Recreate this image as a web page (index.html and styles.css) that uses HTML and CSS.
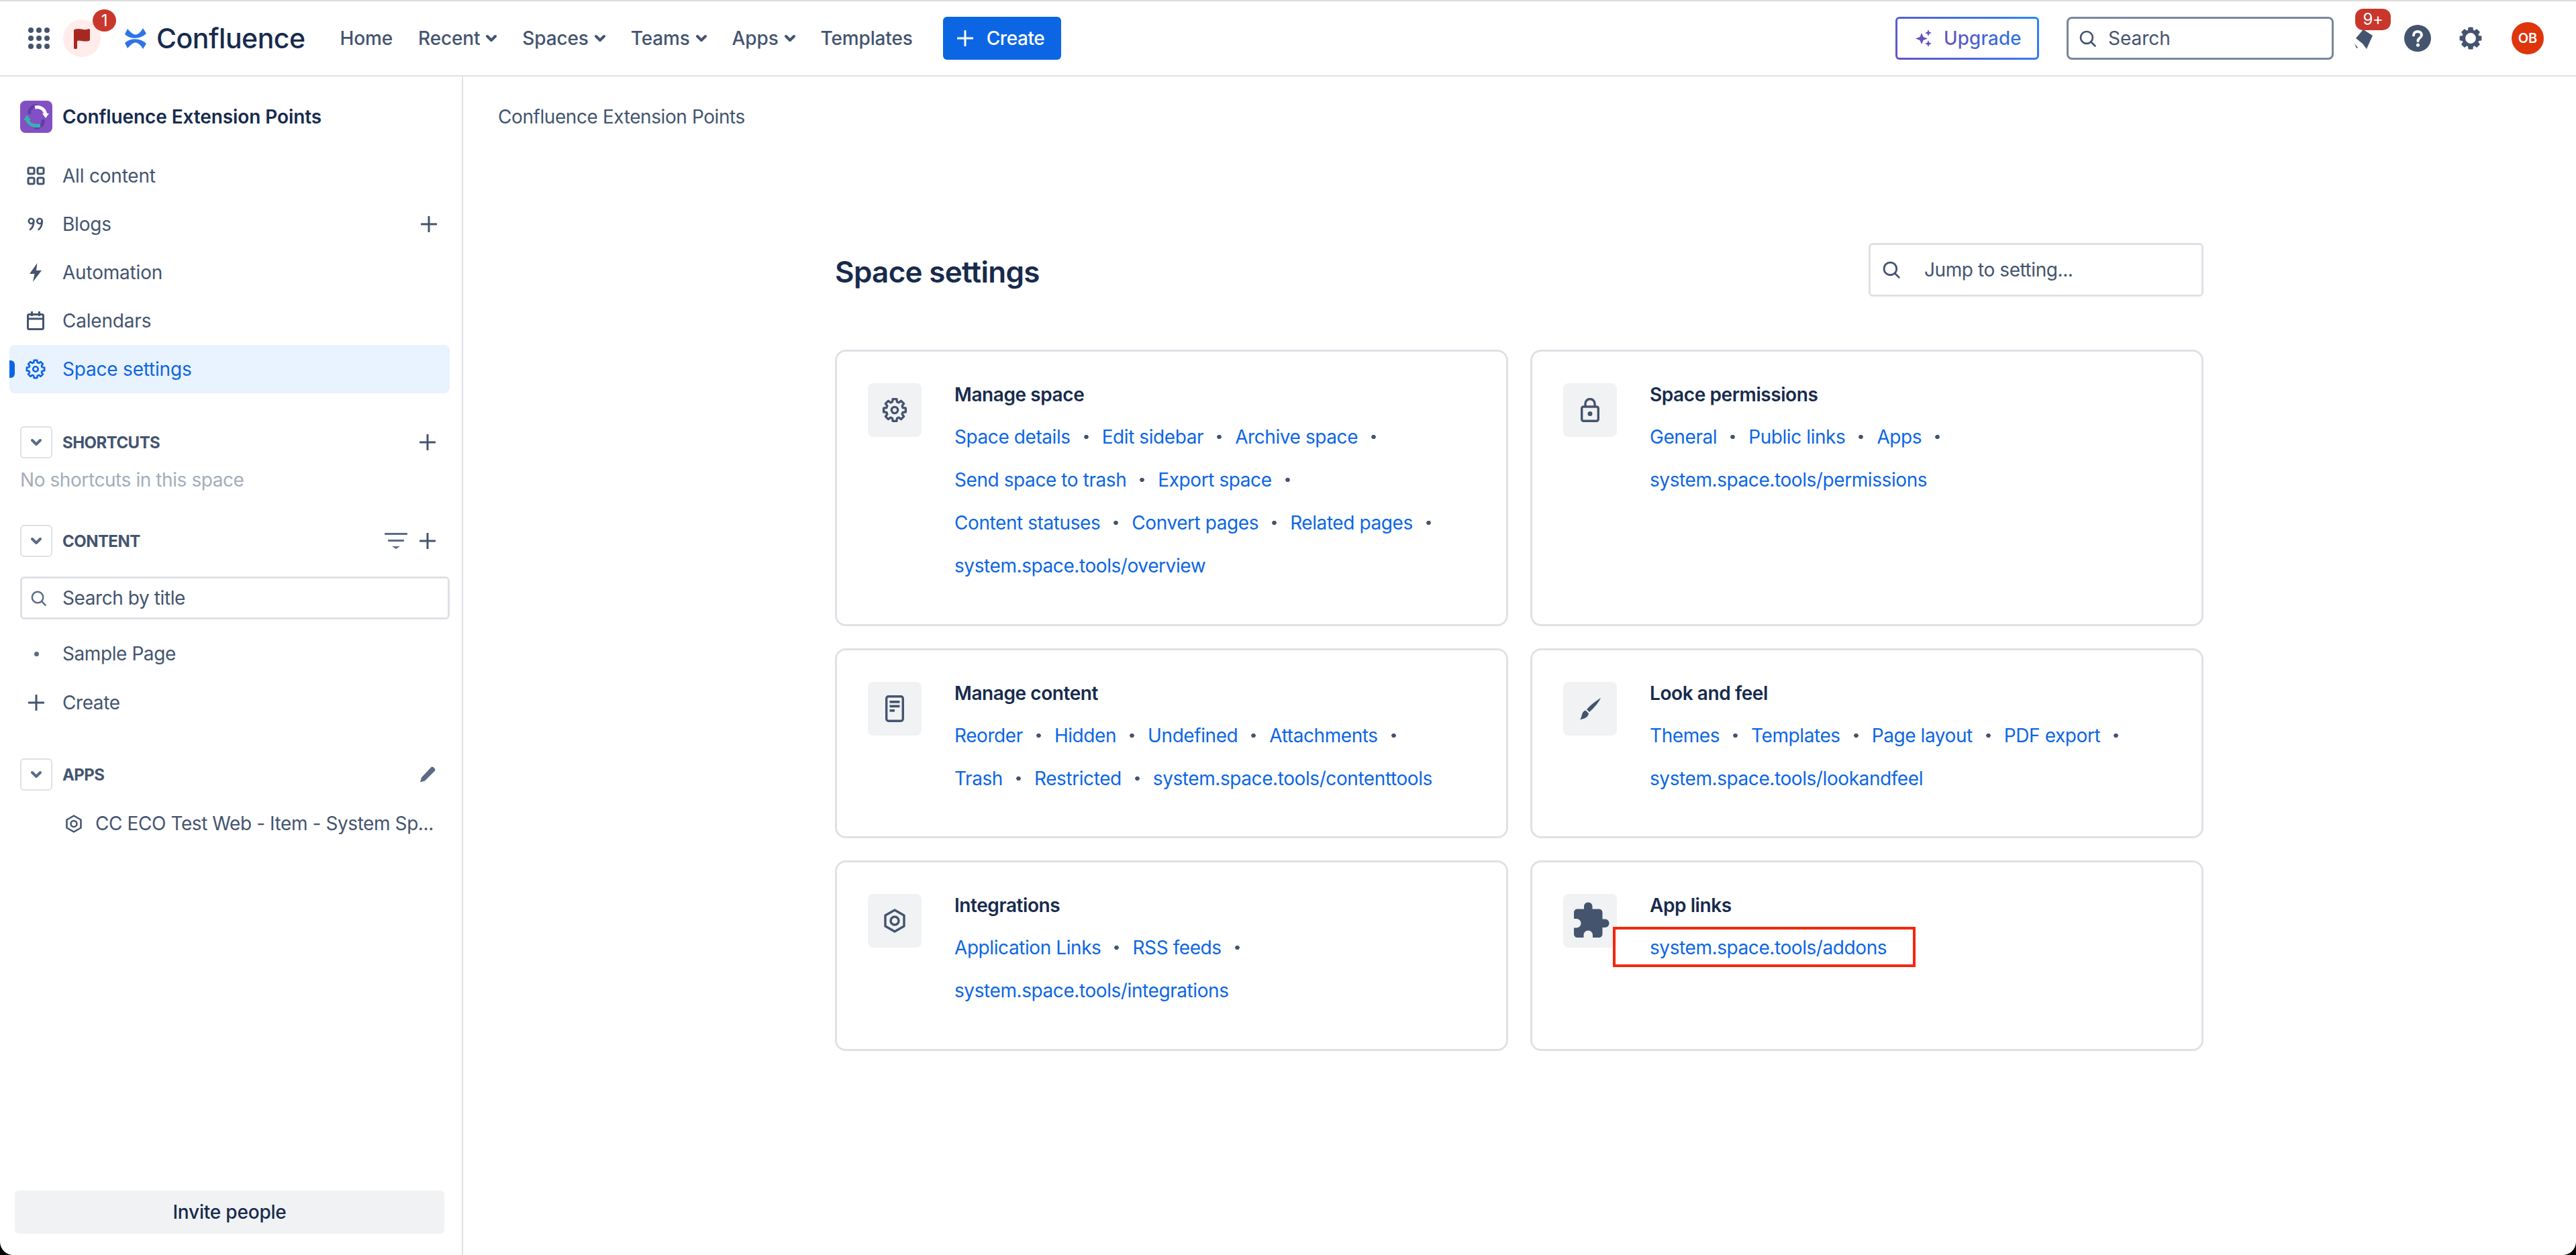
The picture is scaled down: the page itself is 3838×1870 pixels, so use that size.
FILE: index.html
```html
<!DOCTYPE html>
<html lang="en">
<head>
<meta charset="utf-8">
<title>Space settings - Confluence</title>
<link rel="stylesheet" href="styles.css">
</head>
<body>
<svg class="defs" width="0" height="0" aria-hidden="true">
  <defs>
    <symbol id="cog" viewBox="0 0 24 24">
      <polygon fill="none" stroke="currentColor" stroke-width="2" stroke-linejoin="round" points="9.91,4.69 10.26,2.15 13.74,2.15 14.09,4.69 15.68,5.35 17.74,3.81 20.19,6.26 18.65,8.32 19.31,9.91 21.85,10.26 21.85,13.74 19.31,14.09 18.65,15.68 20.19,17.74 17.74,20.19 15.68,18.65 14.09,19.31 13.74,21.85 10.26,21.85 9.91,19.31 8.32,18.65 6.26,20.19 3.81,17.74 5.35,15.68 4.69,14.09 2.15,13.74 2.15,10.26 4.69,9.91 5.35,8.32 3.81,6.26 6.26,3.81 8.32,5.35"/>
      <circle cx="12" cy="12" r="2.8" fill="none" stroke="currentColor" stroke-width="2"/>
    </symbol>
    <symbol id="plus" viewBox="0 0 24 24">
      <path d="M12 1v22M1 12h22" fill="none" stroke="currentColor" stroke-width="3" stroke-linecap="round"/>
    </symbol>
    <symbol id="chev" viewBox="0 0 16 12">
      <path d="M2 3l6 6 6-6" fill="none" stroke="currentColor" stroke-width="4" stroke-linecap="round" stroke-linejoin="round"/>
    </symbol>
    <symbol id="search" viewBox="0 0 24 24">
      <circle cx="10.5" cy="10.5" r="8.6" fill="none" stroke="currentColor" stroke-width="2.6"/>
      <path d="M17 17l5.5 5.5" fill="none" stroke="currentColor" stroke-width="2.6" stroke-linecap="round"/>
    </symbol>
    <symbol id="hex" viewBox="0 0 32 36">
      <polygon points="16,2 30,10 30,26 16,34 2,26 2,10" fill="none" stroke="currentColor" stroke-width="3.4" stroke-linejoin="round"/>
      <circle cx="16" cy="18" r="6" fill="none" stroke="currentColor" stroke-width="3.4"/>
    </symbol>
  </defs>
</svg>
<div class="app">
  <header class="topbar">
    <div class="top-left">
      <svg class="i-grid" viewBox="0 0 32 32" aria-hidden="true"><g fill="#44546f"><circle cx="4" cy="4" r="4"/><circle cx="16" cy="4" r="4"/><circle cx="28" cy="4" r="4"/><circle cx="4" cy="16" r="4"/><circle cx="16" cy="16" r="4"/><circle cx="28" cy="16" r="4"/><circle cx="4" cy="28" r="4"/><circle cx="16" cy="28" r="4"/><circle cx="28" cy="28" r="4"/></g></svg>
      <div class="flag">
        <svg class="i-flag" viewBox="0 0 24 31" aria-hidden="true"><path d="M0 3.5Q0 2 2 1.6Q7 .2 12 1.6T22 1Q24 .7 24 2.5V17Q24 18.6 22.4 19Q17 20.2 12 19T5 19V29.5Q5 31 2.5 31T0 29.5z" fill="#a6291f"/></svg>
        <span class="flag-badge">1</span>
      </div>
      <svg class="i-logo" viewBox="0 0 33 31" aria-hidden="true"><g fill="#2f74e6"><path d="M5 1C10 7 14 9.500 17 9.500C20 9.500 24 7 28 0L33 8C28 12.500 23 14.800 17 14.800C10 14.800 5 13 1 9z"/><path d="M5 30C10 24 14 21.500 17 21.500C20 21.500 24 24 28 31L33 23C28 18.500 23 16.200 17 16.200C10 16.200 5 18 1 22z"/></g></svg>
      <span class="wordmark">Confluence</span>
      <nav class="nav">
        <span class="nav-item">Home</span>
        <span class="nav-item">Recent<svg class="i-chev"><use href="#chev"/></svg></span>
        <span class="nav-item">Spaces<svg class="i-chev"><use href="#chev"/></svg></span>
        <span class="nav-item">Teams<svg class="i-chev"><use href="#chev"/></svg></span>
        <span class="nav-item">Apps<svg class="i-chev"><use href="#chev"/></svg></span>
        <span class="nav-item">Templates</span>
      </nav>
      <button class="create"><svg class="i-plus-sm"><use href="#plus"/></svg>Create</button>
    </div>
    <div class="top-right">
      <button class="upgrade">
        <svg class="i-spark" viewBox="0 0 26 26" aria-hidden="true"><g fill="#6554c0"><path d="M10 5L12.5 11 19 13.5 12.5 16 10 22 7.500 16 1 13.500 7.500 11z"/><path d="M20 0L21.400 3.600 25 5 21.400 6.400 20 10 18.600 6.400 15 5 18.600 3.600z"/><path d="M20 16L21.400 19.600 25 21 21.400 22.400 20 26 18.600 22.400 15 21 18.600 19.600z"/></g></svg>
        <span class="upgrade-text">Upgrade</span>
      </button>
      <div class="top-search"><svg class="i-search"><use href="#search"/></svg><span>Search</span></div>
      <div class="bell">
        <svg class="i-bell" viewBox="0 0 30 32" aria-hidden="true"><g fill="#44546f"><path d="M14 1L28 10 19 30 13 22 3 14z"/><path d="M1 22l5 6-2 1z"/></g></svg>
        <span class="bell-badge">9+</span>
      </div>
      <svg class="i-help" viewBox="0 0 40 40" aria-hidden="true"><circle cx="20" cy="20" r="20" fill="#44546f"/><path d="M14 15.500C14 12 16.800 10 20 10S26 12 26 15.200C26 19.500 20.500 19.500 20.500 24" fill="none" stroke="#fff" stroke-width="4" stroke-linecap="round"/><circle cx="20.500" cy="30" r="2.600" fill="#fff"/></svg>
      <svg class="i-gear" viewBox="0 0 24 24" aria-hidden="true"><polygon fill="#44546f" stroke="#44546f" stroke-width="1" stroke-linejoin="round" points="9.910,4.690 10.260,2.150 13.740,2.150 14.090,4.690 15.680,5.350 17.740,3.810 20.190,6.260 18.650,8.320 19.310,9.910 21.850,10.260 21.850,13.740 19.310,14.090 18.650,15.680 20.190,17.740 17.740,20.190 15.680,18.650 14.090,19.310 13.740,21.850 10.260,21.850 9.910,19.310 8.320,18.650 6.260,20.190 3.810,17.740 5.350,15.680 4.690,14.090 2.150,13.740 2.150,10.260 4.690,9.910 5.350,8.320 3.810,6.260 6.260,3.810 8.320,5.350"/><circle cx="12" cy="12" r="5" fill="#fff"/></svg>
      <span class="avatar">OB</span>
    </div>
  </header>
  <div class="body-row">
    <aside class="sidebar">
      <div class="space-head">
        <svg class="space-logo" viewBox="0 0 48 48" aria-hidden="true">
          <rect width="48" height="48" rx="8" fill="#8350c4"/>
          <path d="M14 20C12 12 20 7 26 8" fill="none" stroke="#5e3fa8" stroke-width="5"/>
          <path d="M34 28C36 36 28 41 22 40" fill="none" stroke="#5e3fa8" stroke-width="5"/>
          <path d="M22 10C30 8 37 13 38 21" fill="none" stroke="#fff" stroke-width="5"/>
          <path d="M33 19l5 7 5-7z" fill="#fff"/>
          <path d="M10 26C11 34 19 39 30 37" fill="none" stroke="#36b3ae" stroke-width="5"/>
          <path d="M5 29l5-8 6 8z" fill="#36b3ae"/>
        </svg>
        <span class="space-name">Confluence Extension Points</span>
      </div>
      <ul class="side-nav">
        <li class="side-row">
          <svg class="i-side" viewBox="0 0 28 28" aria-hidden="true"><g fill="none" stroke="#44546f" stroke-width="3"><rect x="3" y="2" width="9" height="9" rx="2"/><rect x="17" y="2" width="9" height="9" rx="2"/><rect x="3" y="17" width="9" height="9" rx="2"/><rect x="17" y="17" width="9" height="9" rx="2"/></g></svg>
          <span class="grow">All content</span>
        </li>
        <li class="side-row">
          <svg class="i-side" viewBox="0 0 28 28" aria-hidden="true"><g fill="none" stroke="#44546f" stroke-width="2.600" stroke-linecap="round"><circle cx="7.500" cy="9.500" r="3.700"/><path d="M11.200 9.500C11.200 15 10 19 6 22"/><circle cx="20" cy="9.500" r="3.700"/><path d="M23.700 9.500C23.700 15 22.500 19 18.500 22"/></g></svg>
          <span class="grow">Blogs</span>
          <svg class="i-plus"><use href="#plus"/></svg>
        </li>
        <li class="side-row">
          <svg class="i-side" viewBox="0 0 28 28" aria-hidden="true"><path d="M16.500 0L5 16h7.500L10 28 23 11h-8z" fill="#44546f"/></svg>
          <span class="grow">Automation</span>
        </li>
        <li class="side-row">
          <svg class="i-side" viewBox="0 0 28 28" aria-hidden="true"><g fill="none" stroke="#44546f" stroke-width="3"><rect x="2.500" y="4.500" width="23" height="22" rx="2"/><path d="M2.500 11h23M8.500 0v7M19.500 0v7"/></g></svg>
          <span class="grow">Calendars</span>
        </li>
        <li class="side-row active">
          <span class="marker"></span>
          <svg class="i-side i-cog"><use href="#cog"/></svg>
          <span class="grow">Space settings</span>
        </li>
      </ul>

      <div class="sec-head sec-shortcuts">
        <span class="sec-toggle"><svg class="i-chev-sm"><use href="#chev"/></svg></span>
        <span class="sec-title">SHORTCUTS</span>
        <svg class="i-plus"><use href="#plus"/></svg>
      </div>
      <p class="empty">No shortcuts in this space</p>

      <div class="sec-head sec-content">
        <span class="sec-toggle"><svg class="i-chev-sm"><use href="#chev"/></svg></span>
        <span class="sec-title">CONTENT</span>
        <svg class="i-filter" viewBox="0 0 34 24" aria-hidden="true"><g fill="#5b6b85"><rect width="34" height="3" rx="1"/><rect x="5" y="10" width="24" height="3" rx="1"/><path d="M11 20h12l-6 4z"/></g></svg>
        <svg class="i-plus"><use href="#plus"/></svg>
      </div>
      <div class="title-search"><svg class="i-search-sm"><use href="#search"/></svg><span>Search by title</span></div>
      <div class="tree-row"><span class="tree-icon"><span class="dot"></span></span><span>Sample Page</span></div>
      <div class="tree-row"><span class="tree-icon"><svg class="i-plus"><use href="#plus"/></svg></span><span>Create</span></div>

      <div class="sec-head sec-apps">
        <span class="sec-toggle"><svg class="i-chev-sm"><use href="#chev"/></svg></span>
        <span class="sec-title">APPS</span>
        <svg class="i-pencil" viewBox="0 0 24 24" aria-hidden="true"><path d="M17 1.500a3 3 0 0 1 4 0l1.500 1.500a3 3 0 0 1 0 4L8 21.500l-7 2 2-7z" fill="#5b6b85"/></svg>
      </div>
      <div class="app-row"><svg class="i-hex-sm"><use href="#hex"/></svg><span class="app-name">CC ECO Test Web - Item - System Sp...</span></div>

      <button class="invite">Invite people</button>
    </aside>

    <main class="main">
      <div class="crumb">Confluence Extension Points</div>
      <div class="content">
        <div class="page-head">
          <h1>Space settings</h1>
          <div class="jump"><svg class="i-search-md"><use href="#search"/></svg><span>Jump to setting...</span></div>
        </div>
        <div class="cards">
          <section class="card">
            <div class="card-icon"><svg class="ic-cog"><use href="#cog"/></svg></div>
            <div class="card-body">
              <h2>Manage space</h2>
              <div class="link-row"><a>Space details</a><i></i><a>Edit sidebar</a><i></i><a>Archive space</a><i></i></div>
              <div class="link-row"><a>Send space to trash</a><i></i><a>Export space</a><i></i></div>
              <div class="link-row"><a>Content statuses</a><i></i><a>Convert pages</a><i></i><a>Related pages</a><i></i></div>
              <div class="link-row"><a>system.space.tools/overview</a></div>
            </div>
          </section>
          <section class="card">
            <div class="card-icon">
              <svg class="ic-lock" viewBox="0 0 28 36" aria-hidden="true"><g fill="none" stroke="#44546f" stroke-width="3.400"><rect x="1.700" y="13" width="24.600" height="21.300" rx="2.500"/><path d="M7 13V8.500a7 7 0 0 1 14 0V13"/></g><circle cx="14" cy="23.500" r="3.500" fill="#44546f"/></svg>
            </div>
            <div class="card-body">
              <h2>Space permissions</h2>
              <div class="link-row"><a>General</a><i></i><a>Public links</a><i></i><a>Apps</a><i></i></div>
              <div class="link-row"><a>system.space.tools/permissions</a></div>
            </div>
          </section>
          <section class="card">
            <div class="card-icon">
              <svg class="ic-doc" viewBox="0 0 28 40" aria-hidden="true"><rect x="1.700" y="1.700" width="24.600" height="36.600" rx="3" fill="none" stroke="#44546f" stroke-width="3.400"/><g fill="#44546f"><rect x="6.500" y="8" width="15" height="3.600"/><rect x="6.500" y="14.500" width="15" height="3.600"/><rect x="6.500" y="21" width="7.500" height="3.600"/></g></svg>
            </div>
            <div class="card-body">
              <h2>Manage content</h2>
              <div class="link-row"><a>Reorder</a><i></i><a>Hidden</a><i></i><a>Undefined</a><i></i><a>Attachments</a><i></i></div>
              <div class="link-row"><a>Trash</a><i></i><a>Restricted</a><i></i><a>system.space.tools/contenttools</a></div>
            </div>
          </section>
          <section class="card">
            <div class="card-icon">
              <svg class="ic-brush" viewBox="0 0 33 32" aria-hidden="true"><g fill="#44546f"><path d="M32 0C30 5 22 15 15 21L11 17C17 10 27 3 32 0z"/><path d="M9.500 18.500L14 23C13.500 28 8 31.500 1 32C3.500 29 3 27 4.500 23C5.500 20.500 7.500 19 9.500 18.500z"/></g></svg>
            </div>
            <div class="card-body">
              <h2>Look and feel</h2>
              <div class="link-row"><a>Themes</a><i></i><a>Templates</a><i></i><a>Page layout</a><i></i><a>PDF export</a><i></i></div>
              <div class="link-row"><a>system.space.tools/lookandfeel</a></div>
            </div>
          </section>
          <section class="card">
            <div class="card-icon"><svg class="ic-hex"><use href="#hex"/></svg></div>
            <div class="card-body">
              <h2>Integrations</h2>
              <div class="link-row"><a>Application Links</a><i></i><a>RSS feeds</a><i></i></div>
              <div class="link-row"><a>system.space.tools/integrations</a></div>
            </div>
          </section>
          <section class="card">
            <div class="card-icon">
              <svg class="ic-puzzle" viewBox="0 0 24 24" aria-hidden="true"><path fill="#44546f" d="M20.500 11H19V7c0-1.100-.9-2-2-2h-4V3.500C13 2.120 11.880 1 10.500 1S8 2.120 8 3.500V5H4c-1.100 0-1.990.9-1.990 2v3.800H3.500c1.490 0 2.700 1.210 2.700 2.700s-1.210 2.700-2.700 2.700H2V20c0 1.100.9 2 2 2h3.800v-1.500c0-1.490 1.210-2.700 2.700-2.700 1.490 0 2.700 1.210 2.700 2.700V22H17c1.100 0 2-.9 2-2v-4h1.500c1.380 0 2.500-1.120 2.500-2.500S21.880 11 20.500 11z"/></svg>
            </div>
            <div class="card-body">
              <h2>App links</h2>
              <div class="link-row"><a>system.space.tools/addons</a></div>
            </div>
            <div class="annotation"></div>
          </section>
        </div>
      </div>
    </main>
  </div>
</div>
</body>
</html>
```
FILE: styles.css
```css
* { box-sizing: border-box; }
html, body { margin: 0; padding: 0; height: 100%; background: #000; }
body { font-family: Inter, "Liberation Sans", sans-serif; font-size: 28px; letter-spacing: -0.42px; color: #44546f; overflow: hidden; }
.defs { position: absolute; }
ul { list-style: none; margin: 0; padding: 0; }
button { font: inherit; letter-spacing: inherit; border: 0; padding: 0; }
svg { display: block; flex: none; }

.app { width: 3838px; height: 1870px; background: #fff; border-radius: 0 0 20px 20px; overflow: hidden; display: flex; flex-direction: column; }

/* Top bar */
.topbar { height: 114px; flex: none; border-top: 2px solid #dcdcdc; border-bottom: 2px solid #dfe1e6; display: flex; align-items: center; justify-content: space-between; padding: 0 48px 0 42px; }
.top-left, .top-right { display: flex; align-items: center; }
.i-grid { width: 32px; height: 32px; }
.flag { position: relative; width: 56px; height: 56px; margin-left: 20px; border-radius: 50%; background: #ffeceb; display: flex; align-items: center; justify-content: center; }
.i-flag { width: 24px; height: 31px; }
.flag-badge { position: absolute; left: 44px; top: -15px; width: 35px; height: 33px; border-radius: 50%; background: #c9372c; color: #fff; font-size: 24px; line-height: 33px; text-align: center; }
.i-logo { width: 33px; height: 31px; margin-left: 35px; }
.wordmark { margin-left: 15px; font-size: 41px; line-height: 50px; color: #172b4d; font-weight: 500; letter-spacing: -0.5px; }
.nav { display: flex; align-items: center; gap: 38px; margin-left: 52px; letter-spacing: -0.15px; }
.nav-item { display: flex; align-items: center; gap: 9px; font-weight: 500; color: #44546f; line-height: 40px; }
.i-chev { width: 16px; height: 12px; color: #44546f; }
.create { margin-left: 45px; height: 64px; width: 176px; border-radius: 6px; background: #0c66e4; color: #fff; font-weight: 500; display: flex; align-items: center; padding-left: 21px; gap: 20px; }
.i-plus-sm { width: 24px; height: 24px; }

.upgrade { width: 214px; height: 64px; border-radius: 6px; border: 3px solid transparent; background: linear-gradient(#fff, #fff) padding-box, linear-gradient(45deg, #6554c0, #2684ff) border-box; display: flex; align-items: center; padding-left: 26px; gap: 17px; letter-spacing: 0; }
.i-spark { width: 26px; height: 26px; }
.upgrade-text { font-weight: 500; background: linear-gradient(90deg, #6554c0, #2d74e8); -webkit-background-clip: text; background-clip: text; color: transparent; }
.top-search { width: 398px; height: 64px; margin-left: 41px; border: 3px solid #7a869a; border-radius: 8px; display: flex; align-items: center; padding-left: 16px; gap: 18px; color: #44546f; letter-spacing: 0; }
.i-search { width: 25px; height: 25px; color: #44546f; }
.bell { position: relative; width: 30px; height: 32px; margin-left: 30px; margin-top: 4px; }
.i-bell { width: 30px; height: 32px; }
.bell-badge { position: absolute; left: 2px; top: -30px; width: 53px; height: 32px; border-radius: 12px; background: #c9372c; color: #fff; font-size: 24px; line-height: 32px; text-align: center; }
.i-help { width: 40px; height: 40px; margin-left: 45px; }
.i-gear { width: 38px; height: 38px; margin-left: 40px; }
.avatar { width: 48px; height: 48px; margin-left: 42px; border-radius: 50%; background: #de350b; color: #fff; font-size: 20px; font-weight: 600; line-height: 48px; text-align: center; letter-spacing: 0; }

.body-row { flex: 1; display: flex; min-height: 0; }

/* Sidebar */
.sidebar { width: 690px; flex: none; border-right: 2px solid #dfe1e6; display: flex; flex-direction: column; padding-top: 36px; }
.space-head { display: flex; align-items: center; gap: 15px; padding-left: 30px; height: 48px; }
.space-logo { width: 48px; height: 48px; }
.space-name { font-weight: 600; color: #172b4d; letter-spacing: -0.1px; }
.side-nav { margin-top: 28px; letter-spacing: -0.2px; }
.side-row { position: relative; height: 72px; margin-left: 14px; width: 656px; padding: 0 19px 0 25px; display: flex; align-items: center; gap: 26px; }
.grow { flex: 1; }
.i-side { width: 28px; height: 28px; }
.i-plus { width: 24px; height: 24px; color: #44546f; }
.active { background: #e9f2ff; border-radius: 8px; color: #0c66e4; }
.marker { position: absolute; left: 0; top: 23px; width: 8px; height: 26px; background: #0c66e4; border-radius: 0 6px 6px 0; }
.i-cog { color: #0c66e4; width: 32px; height: 32px; margin: 0 -2px; }

.sec-head { display: flex; align-items: center; height: 48px; padding-left: 30px; padding-right: 39px; }
.sec-shortcuts { margin-top: 49px; }
.sec-content { margin-top: 47px; }
.sec-apps { margin-top: 47px; }
.sec-toggle { width: 48px; height: 48px; flex: none; border: 2px solid #dfe1e6; border-radius: 6px; display: flex; align-items: center; justify-content: center; }
.i-chev-sm { width: 16px; height: 12px; color: #5b6b85; }
.sec-title { flex: 1; margin-left: 15px; font-size: 24px; font-weight: 700; color: #44546f; letter-spacing: -0.55px; }
.i-filter { width: 34px; height: 24px; margin-right: 18px; }
.i-pencil { width: 24px; height: 24px; }
.empty { margin: 12px 0 0 30px; line-height: 40px; color: #a5adba; }
.title-search { height: 64px; margin: 29px 18px 0 30px; border: 3px solid #dfe1e6; border-radius: 6px; display: flex; align-items: center; padding-left: 13px; gap: 24px; color: #44546f; }
.i-search-sm { width: 23px; height: 23px; color: #5b6b85; }
.tree-row { height: 72px; padding-left: 42px; display: flex; align-items: center; gap: 27px; }
.title-search + .tree-row { margin-top: 15px; }
.tree-row + .tree-row { margin-top: 1px; }
.tree-icon { width: 24px; display: flex; justify-content: center; }
.dot { width: 7px; height: 7px; border-radius: 50%; background: #5b6b85; }
.app-row { height: 72px; margin-top: 13px; padding-left: 98px; display: flex; align-items: center; gap: 20px; }
.i-hex-sm { width: 24px; height: 27px; color: #44546f; }
.invite { margin: auto 26px 32px 22px; height: 64px; flex: none; background: #f1f2f4; border-radius: 6px; color: #172b4d; font-weight: 500; letter-spacing: -0.2px; }

/* Main */
.main { flex: 1; min-width: 0; }
.crumb { padding: 40px 0 0 52px; line-height: 40px; }
.content { margin: 168px 0 0 554px; width: 2039px; }
.page-head { display: flex; align-items: center; justify-content: space-between; height: 80px; }
h1 { margin: 6px 0 0; font-size: 44px; font-weight: 600; color: #172b4d; letter-spacing: -0.7px; }
.jump { width: 499px; height: 80px; border: 3px solid #dfe1e6; border-radius: 6px; display: flex; align-items: center; padding-left: 18px; gap: 36px; }
.i-search-md { width: 26px; height: 26px; color: #44546f; }
.cards { margin-top: 79px; display: grid; grid-template-columns: 1003px 1003px; grid-template-rows: 412px 283px 284px; gap: 33px; }
.card { position: relative; border: 3px solid #dfe1e6; border-radius: 16px; padding: 47px 46px; display: flex; gap: 49px; }
.card-icon { width: 80px; height: 80px; flex: none; background: #f1f2f4; border-radius: 8px; display: flex; align-items: center; justify-content: center; }
.ic-cog { width: 40px; height: 40px; color: #44546f; }
.ic-lock { width: 28px; height: 36px; }
.ic-doc { width: 28px; height: 40px; }
.ic-brush { width: 33px; height: 32px; }
.ic-hex { width: 32px; height: 36px; color: #44546f; }
.ic-puzzle { width: 60px; height: 60px; margin-left: 2px; }
h2 { margin: 0 0 14px; font-size: 28px; line-height: 34px; font-weight: 600; color: #172b4d; }
.link-row { display: flex; align-items: center; height: 64px; }
.link-row a { color: #0c66e4; }
.link-row i { width: 47px; height: 6px; flex: none; background: radial-gradient(circle at center, #44546f 3px, transparent 3.500px); }
.annotation { position: absolute; left: 120px; top: 96px; width: 451px; height: 60px; border: 4px solid #f5260d; }
```
